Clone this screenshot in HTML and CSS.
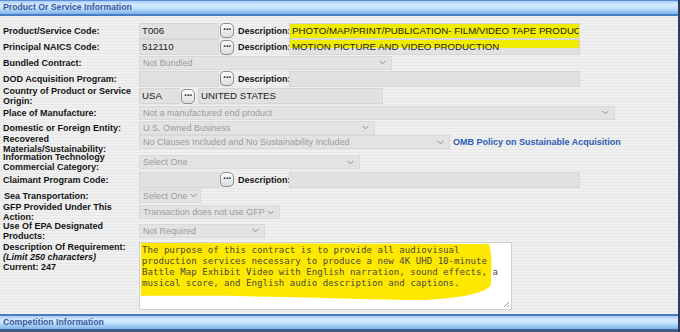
FILE: index.html
```html
<!DOCTYPE html>
<html>
<head>
<meta charset="utf-8">
<link rel="stylesheet" href="styles.css">
</head>
<body>
<div class="page">
  <div class="bar">Product Or Service Information</div>
  <div class="form">
    <div class="row h17">
      <div class="label">Product/Service Code:</div>
      <div class="ctrls">
        <div class="field w80">T006</div>
        <div class="dots">&middot;&middot;&middot;</div>
        <div class="desc">Description:</div>
        <div class="field w291 hl">PHOTO/MAP/PRINT/PUBLICATION- FILM/VIDEO TAPE PRODUCTION</div>
      </div>
    </div>
    <div class="row h16">
      <div class="label">Principal NAICS Code:</div>
      <div class="ctrls">
        <div class="field w80">512110</div>
        <div class="dots">&middot;&middot;&middot;</div>
        <div class="desc">Description:</div>
        <div class="field w291 hl2">MOTION PICTURE AND VIDEO PRODUCTION</div>
      </div>
    </div>
    <div class="row h15">
      <div class="label">Bundled Contract:</div>
      <div class="ctrls">
        <div class="select w253">Not Bundled<svg class="chev" width="7" height="5" viewBox="0 0 7 5"><polyline points="0.5,0.8 3.5,3.8 6.5,0.8" fill="none" stroke="#8c8c8c" stroke-width="1"/></svg></div>
      </div>
    </div>
    <div class="row h17">
      <div class="label">DOD Acquisition Program:</div>
      <div class="ctrls">
        <div class="field w80"></div>
        <div class="dots">&middot;&middot;&middot;</div>
        <div class="desc">Description:</div>
        <div class="field w291"></div>
      </div>
    </div>
    <div class="row h18">
      <div class="label">Country of Product or Service Origin:</div>
      <div class="ctrls">
        <div class="field w41">USA</div>
        <div class="dots">&middot;&middot;&middot;</div>
        <div class="field w185 ml3">UNITED STATES</div>
      </div>
    </div>
    <div class="row h15">
      <div class="label">Place of Manufacture:</div>
      <div class="ctrls">
        <div class="select w476">Not a manufactured end product<svg class="chev" width="7" height="5" viewBox="0 0 7 5"><polyline points="0.5,0.8 3.5,3.8 6.5,0.8" fill="none" stroke="#8c8c8c" stroke-width="1"/></svg></div>
      </div>
    </div>
    <div class="row h15">
      <div class="label">Domestic or Foreign Entity:</div>
      <div class="ctrls">
        <div class="select w236">U.S. Owned Business<svg class="chev" width="7" height="5" viewBox="0 0 7 5"><polyline points="0.5,0.8 3.5,3.8 6.5,0.8" fill="none" stroke="#8c8c8c" stroke-width="1"/></svg></div>
      </div>
    </div>
    <div class="row h18 top">
      <div class="label">Recovered Materials/Sustainability:</div>
      <div class="ctrls">
        <div class="select w311">No Clauses Included and No Sustainability Included<svg class="chev" width="7" height="5" viewBox="0 0 7 5"><polyline points="0.5,0.8 3.5,3.8 6.5,0.8" fill="none" stroke="#8c8c8c" stroke-width="1"/></svg></div>
        <a class="link">OMB Policy on Sustainable Acquisition</a>
      </div>
    </div>
    <div class="row h18">
      <div class="label">Information Technology Commercial Category:</div>
      <div class="ctrls">
        <div class="select w221">Select One<svg class="chev" width="7" height="5" viewBox="0 0 7 5"><polyline points="0.5,0.8 3.5,3.8 6.5,0.8" fill="none" stroke="#8c8c8c" stroke-width="1"/></svg></div>
      </div>
    </div>
    <div class="row h17">
      <div class="label">Claimant Program Code:</div>
      <div class="ctrls">
        <div class="field w80"></div>
        <div class="dots">&middot;&middot;&middot;</div>
        <div class="desc">Description:</div>
        <div class="field w291"></div>
      </div>
    </div>
    <div class="row h15">
      <div class="label ind">Sea Transportation:</div>
      <div class="ctrls">
        <div class="select w62">Select One<svg class="chev" width="7" height="5" viewBox="0 0 7 5"><polyline points="0.5,0.8 3.5,3.8 6.5,0.8" fill="none" stroke="#8c8c8c" stroke-width="1"/></svg></div>
      </div>
    </div>
    <div class="row h18">
      <div class="label">GFP Provided Under This Action:</div>
      <div class="ctrls">
        <div class="select w141">Transaction does not use GFP<svg class="chev" width="7" height="5" viewBox="0 0 7 5"><polyline points="0.5,0.8 3.5,3.8 6.5,0.8" fill="none" stroke="#8c8c8c" stroke-width="1"/></svg></div>
      </div>
    </div>
    <div class="row h19">
      <div class="label">Use Of EPA Designated Products:</div>
      <div class="ctrls">
        <div class="select w126">Not Required<svg class="chev" width="7" height="5" viewBox="0 0 7 5"><polyline points="0.5,0.8 3.5,3.8 6.5,0.8" fill="none" stroke="#8c8c8c" stroke-width="1"/></svg></div>
      </div>
    </div>
    <div class="row req">
      <div class="label">Description Of Requirement:<br><i>(Limit 250 characters)</i><br>Current: 247</div>
      <div class="ctrls">
        <div class="textarea">
          <svg class="marker" width="373" height="68" viewBox="0 0 373 68"><path d="M1,0 L349,1 C351,8 352,18 351,28 L351,42 C346,50 322,55 285,57 C220,57 150,52 1,53 Z" fill="#ffe800"/></svg>
          <div class="tatext">The purpose of this contract is to provide all audiovisual<br>production services necessary to produce a new 4K UHD 10-minute<br>Battle Map Exhibit Video with English narration, sound effects, a<br>musical score, and English audio description and captions.</div>
          <svg class="grip" width="8" height="8" viewBox="0 0 8 8"><path d="M7,2 L2,7 M7,5 L5,7" stroke="#999" stroke-width="1"/></svg>
        </div>
      </div>
    </div>
  </div>
  <div class="bar bottom">Competition Information</div>
</div>
</body>
</html>
```

FILE: styles.css
```css
html, body {
  margin: 0;
  padding: 0;
  background: #ececec;
}

.page {
  width: 678px;
  height: 332px;
  border-right: 2px solid #2e3b55;
  overflow: hidden;
  background: repeating-linear-gradient(to bottom, #f0f0f0 0, #f0f0f0 2px, #e7e7e7 2px, #e7e7e7 3px);
  font-family: "Liberation Sans", Arial, sans-serif;
}

.bar {
  height: 16px;
  box-sizing: border-box;
  border-top: 1px solid #5c8fd8;
  border-bottom: 2px solid #4a7cc4;
  background: linear-gradient(to bottom, #a9cdf5 0%, #d6ecfe 30%, #c3e1fc 55%, #9ac7f2 80%, #7fb2ea 100%);
  padding-left: 3px;
  font-size: 8.7px;
  font-weight: bold;
  line-height: 13px;
  color: #3a5a9c;
}

.bar.bottom {
  margin-top: 2px;
  border-top: 2px solid #4a7cc4;
  border-bottom: 1px solid #3a66a8;
  line-height: 12px;
  box-shadow: 0 2px 0 #4b5a78;
}

.form {
  padding-top: 6px;
}

.row {
  display: flex;
  align-items: center;
}

.row.top .ctrls { align-self: flex-start; }

.h15 { height: 15px; }
.h16 { height: 16px; }
.h17 { height: 17px; }
.h18 { height: 18px; }
.h19 { height: 19px; }

.label {
  width: 139px;
  flex: none;
  box-sizing: border-box;
  padding: 0 5px 0 3px;
  font-size: 9px;
  font-weight: bold;
  line-height: 10px;
  color: #141414;
}

.label.ind { padding-left: 4px; }

.ctrls {
  display: flex;
  align-items: center;
}

.field {
  height: 16px;
  box-sizing: border-box;
  border: 1px solid #d6d6d6;
  background: #e1e1e1;
  padding-left: 2px;
  font-size: 9.7px;
  line-height: 14px;
  color: #1c1c1c;
  white-space: nowrap;
  overflow: hidden;
}

.w80 { width: 80px; }
.w41 { width: 41px; }
.w185 { width: 185px; }
.w291 { width: 291px; }
.ml3 { margin-left: 3px; }

.field.hl {
  background: #f0ec00;
}

.field.hl2 {
  background: linear-gradient(to bottom, #f0ec00 0, #f0ec00 60%, #e1e1e1 60%);
}

.dots {
  width: 14px;
  height: 15px;
  box-sizing: border-box;
  margin-left: 1px;
  border: 1px solid #8d8d8d;
  border-radius: 4px 5px 5px 4px;
  background: linear-gradient(to bottom, #ffffff, #dcdcdc);
  font-size: 11px;
  font-weight: bold;
  line-height: 11px;
  text-align: center;
  color: #333;
  letter-spacing: -1px;
}

.desc {
  margin-left: 4px;
  width: 51px;
  font-size: 9px;
  font-weight: bold;
  color: #141414;
  white-space: nowrap;
}

.select {
  height: 14px;
  box-sizing: border-box;
  border: 1px solid #d9d9d9;
  background: #e3e3e3;
  padding-left: 3px;
  font-size: 9px;
  line-height: 12px;
  color: #9c9c9c;
  white-space: nowrap;
  display: flex;
  align-items: center;
  justify-content: space-between;
  padding-right: 5px;
  overflow: hidden;
}

.chev { flex: none; margin-left: 2px; }

.w253 { width: 253px; }
.w476 { width: 476px; }
.w236 { width: 236px; }
.w311 { width: 311px; }
.w221 { width: 221px; }
.w62 { width: 62px; }
.w141 { width: 141px; }
.w126 { width: 126px; }

.link {
  margin-left: 3px;
  font-size: 9px;
  font-weight: bold;
  color: #2c5cb4;
}

.row.req {
  height: 72px;
  align-items: flex-start;
}

.row.req .label {
  padding-top: 2px;
}

.row.req .ctrls {
  padding-top: 2px;
}

.textarea {
  position: relative;
  width: 373px;
  height: 68px;
  box-sizing: border-box;
  border: 1px solid #cfcfcf;
  background: #fff;
}

.marker {
  position: absolute;
  left: 0;
  top: 0;
}

.tatext {
  position: relative;
  padding: 2px 0 0 2px;
  font-family: "DejaVu Sans Mono", "Liberation Mono", monospace;
  font-size: 9.1px;
  line-height: 11px;
  color: #4a4a3c;
  white-space: nowrap;
}

.grip {
  position: absolute;
  right: 1px;
  bottom: 1px;
}
```
